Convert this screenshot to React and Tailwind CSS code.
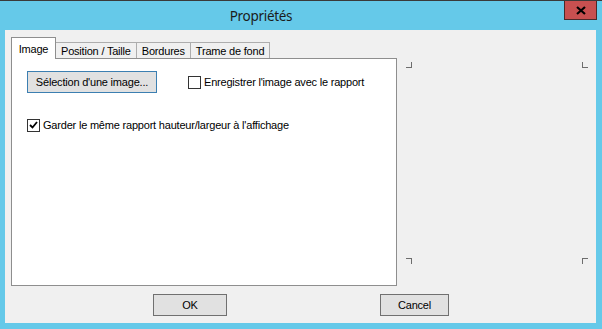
export default function App() {
  const tabs = ['Position / Taille', 'Bordures', 'Trame de fond']
  return (
    <div className="w-[602px] h-[329px] bg-[#65c9e9] border-t border-[#3a3a3a] flex flex-col overflow-hidden" style={{ fontFamily: '"Liberation Sans", Arial, sans-serif' }}>
      {/* title bar */}
      <div className="h-[29px] flex items-start shrink-0">
        <div className="flex-1 text-center pt-[5px] pr-[42px] text-[13.5px] tracking-[-0.3px] text-[#1b1b1b]" style={{ fontFamily: '"Noto Sans", "Open Sans", sans-serif' }}>Propriétés</div>
        <div className="w-[33px] h-[20px] -mt-px mr-[5px] bg-[#c75050] border border-[#4a2a2a] flex items-center justify-center">
          <svg width="10" height="9" viewBox="0 0 10 9"><path d="M1 1 L9 8 M9 1 L1 8" stroke="#000" strokeWidth="2.2" /></svg>
        </div>
      </div>

      {/* client */}
      <div className="ml-[5px] mr-[6px] h-[293px] bg-[#f0f0f0] flex flex-col pl-[6px] pt-[8px] text-[11px] tracking-[-0.2px] text-black">
        <div className="flex">
          <div className="w-[386px] flex flex-col">
            <div className="flex items-end h-[21px]">
              <div className="h-[22px] w-[45px] bg-white border border-b-0 border-[#8e8e8e] flex justify-center pt-[3px] relative z-10">Image</div>
              {tabs.map((t) => (
                <div key={t} className="h-[17px] px-[5px] bg-[#f0f0f0] border border-l-0 border-b-0 border-[#adadad] flex items-center">{t}</div>
              ))}
            </div>
            <div className="h-[228px] bg-white border border-[#8e8e8e] -mt-px pl-[15px] pt-[12px]">
              <div className="flex items-center">
                <div className="w-[130px] h-[22px] bg-[#e1e1e1] border border-[#3c7fb1] flex items-center justify-center">Sélection d'une image...</div>
                <div className="ml-[31px] flex items-center gap-[3px]">
                  <div className="w-[13px] h-[13px] border border-[#333] bg-white" />
                  <span>Enregistrer l'image avec le rapport</span>
                </div>
              </div>
              <div className="flex items-center gap-[3px] mt-[24px]">
                <div className="w-[13px] h-[13px] border border-[#333] bg-white flex items-center justify-center">
                  <svg width="9" height="8" viewBox="0 0 9 8"><path d="M1 4 L3.5 6.5 L8 1" fill="none" stroke="#000" strokeWidth="1.8" /></svg>
                </div>
                <span>Garder le même rapport hauteur/largeur à l'affichage</span>
              </div>
            </div>
          </div>

          {/* preview corners */}
          <div className="ml-[9px] w-[182px] mt-[24px] h-[202px] flex flex-col justify-between">
            <div className="flex justify-between">
              <div className="w-[6px] h-[6px] border-r border-b border-[#6d6d6d]" />
              <div className="w-[6px] h-[6px] border-l border-b border-[#6d6d6d]" />
            </div>
            <div className="flex justify-between">
              <div className="w-[6px] h-[6px] border-r border-t border-[#6d6d6d]" />
              <div className="w-[6px] h-[6px] border-l border-t border-[#6d6d6d]" />
            </div>
          </div>
        </div>

        <div className="flex mt-[8px]">
          <div className="ml-[142px] w-[74px] h-[22px] bg-[#e1e1e1] border border-[#707070] flex items-center justify-center">OK</div>
          <div className="ml-[153px] w-[69px] h-[22px] bg-[#e1e1e1] border border-[#707070] flex items-center justify-center">Cancel</div>
        </div>
      </div>
    </div>
  )
}
